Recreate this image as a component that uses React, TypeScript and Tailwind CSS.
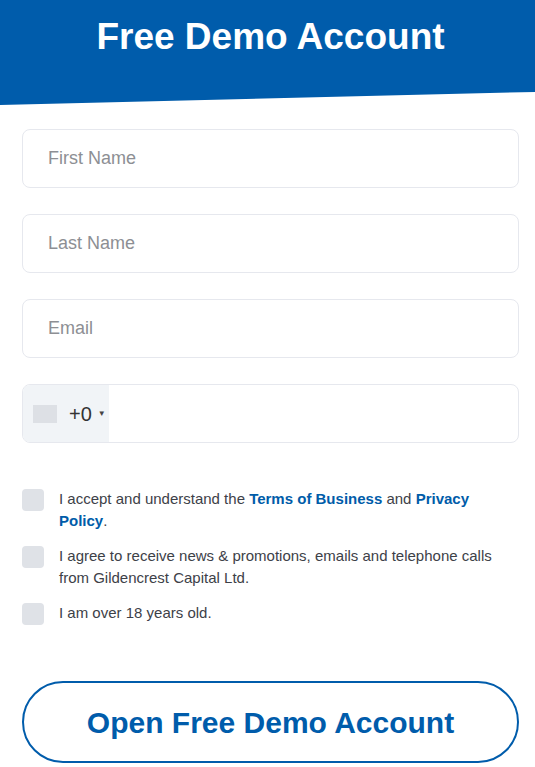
import { useState } from 'react';

const inputClass =
  'h-[59px] w-full rounded-lg border border-[#e6e8ee] bg-white px-[25px] text-[18px] text-[#333] placeholder:text-[#8d8f94] outline-none';

export default function App() {
  const [checks, setChecks] = useState([false, false, false]);

  const toggle = (i: number) =>
    setChecks(prev => prev.map((c, idx) => (idx === i ? !c : c)));

  const consents = [
    <>
      I accept and understand the <a className="font-bold text-[#005ca9]">Terms of Business</a> and{' '}
      <a className="font-bold text-[#005ca9]">Privacy Policy</a>.
    </>,
    <>I agree to receive news &amp; promotions, emails and telephone calls from Gildencrest Capital Ltd.</>,
    <>I am over 18 years old.</>,
  ];

  return (
    <div className="min-h-screen bg-white font-['Liberation_Sans',Arial,sans-serif]">
      <div className="flex h-[105px] justify-center bg-[#005cab] pl-[6px] pt-[16px] [clip-path:polygon(0_0,100%_0,100%_87.5%,0_100%)]">
        <h1 className="text-[37px] font-bold leading-[42px] text-white">Free Demo Account</h1>
      </div>

      <form className="flex flex-col pl-[22px] pr-[16px] pt-[24px]" onSubmit={e => e.preventDefault()}>
        <div className="flex flex-col gap-[26px]">
          <input className={inputClass} placeholder="First Name" />
          <input className={inputClass} placeholder="Last Name" />
          <input className={inputClass} placeholder="Email" />
          <div className="flex h-[59px] w-full overflow-hidden rounded-lg border border-[#e6e8ee] bg-white">
            <div className="flex w-[86px] items-center bg-[#f1f4f7] pl-[10px]">
              <span className="h-[18px] w-[24px] bg-[#dde0e5]" />
              <span className="ml-[12px] text-[20px] text-[#333]">+0</span>
              <span className="ml-[6px] text-[8px] text-[#444]">▼</span>
            </div>
            <input className="flex-1 px-3 text-[18px] outline-none" />
          </div>
        </div>

        <div className="mt-[45px] flex flex-col gap-[13px]">
          {consents.map((text, i) => (
            <label key={i} className="flex cursor-pointer items-start">
              <button
                type="button"
                onClick={() => toggle(i)}
                className={`mt-[1px] h-[22px] w-[22px] shrink-0 rounded-[4px] ${checks[i] ? 'bg-[#005cab]' : 'bg-[#dfe2e7]'}`}
              />
              <span className="ml-[15px] text-[15px] leading-[22px] text-[#3d4148]">{text}</span>
            </label>
          ))}
        </div>

        <button
          type="submit"
          className="mt-[56px] flex h-[82px] w-full items-center justify-center rounded-full border-2 border-[#005cab] bg-white text-[30px] font-bold text-[#005cab]"
        >
          Open Free Demo Account
        </button>
      </form>
    </div>
  );
}
